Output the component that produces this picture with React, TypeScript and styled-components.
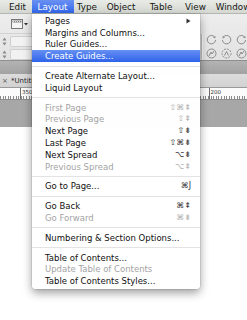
import React from "react";
import styled, { createGlobalStyle, css } from "styled-components";

const GlobalStyle = createGlobalStyle`
  html, body { margin: 0; padding: 0; }
  body { background: #fff; font-family: "DejaVu Sans", "Noto Sans", sans-serif; }
  #root { width: 247px; height: 320px; }
`;

const Screen = styled.div`
  position: relative;
  width: 247px;
  height: 320px;
  overflow: hidden;
  display: flex;
  flex-direction: column;
  background: #fff;
`;

const MenuBar = styled.div`
  height: 14px;
  flex: none;
  display: flex;
  align-items: stretch;
  box-sizing: border-box;
  background: linear-gradient(#e9ece6, #d4d8d1);
  border-bottom: 1px solid #b4b7b1;
  font-size: 8.8px;
  color: #161616;
  white-space: nowrap;
  overflow: hidden;
`;

const Title = styled.div<{ $w?: number; $pl: number; $active?: boolean }>`
  display: flex;
  align-items: center;
  flex: ${(p) => (p.$w ? "none" : "1")};
  width: ${(p) => (p.$w ? `${p.$w}px` : "auto")};
  padding-left: ${(p) => p.$pl}px;
  box-sizing: border-box;
  ${(p) =>
    p.$active &&
    css`
      background: linear-gradient(#6a91f3, #2f64ea);
      color: #fff;
      margin-bottom: -1px;
    `}
`;

const ControlPanel = styled.div`
  height: 46px;
  flex: none;
  display: flex;
  background: linear-gradient(#ededed, #e2e2e2);
`;

const LeftTools = styled.div`
  width: 32px;
  display: flex;
  flex-direction: column;
`;

const IconRow = styled.div`
  height: 19px;
  display: flex;
  align-items: center;
  padding-left: 11px;
  border-bottom: 1px solid #d3d3d3;
`;

const SpinRow = styled.div`
  height: 11px;
  margin-top: 2px;
  display: flex;
  align-items: center;
  gap: 3px;
  padding-left: 2px;
`;

const Field = styled.div`
  flex: 1;
  height: 11px;
  box-sizing: border-box;
  background: #f2f2f2;
  border: 1px solid #d0d0d0;
  border-right: none;
  border-radius: 2px 0 0 2px;
`;

const RightTools = styled.div`
  margin-left: auto;
  width: 52px;
  display: flex;
  align-items: center;
  padding-top: 19px;
  box-sizing: border-box;
`;

const FieldEdge = styled.div`
  width: 11px;
  height: 25px;
  box-sizing: border-box;
  border: 1px solid #cfcfcf;
  border-left: none;
  border-radius: 0 3px 3px 0;
  background: #ececec;
`;

const Divider = styled.div`
  width: 1px;
  height: 25px;
  margin: 0 4px 0 4px;
  background: #bdbdbd;
  box-shadow: 1px 0 0 #f8f8f8;
`;

const IconGrid = styled.div`
  display: grid;
  grid-template-columns: 11px 11px 11px;
  column-gap: 4px;
  row-gap: 3px;
  margin-left: 1px;
`;

const DarkBand = styled.div`
  height: 14px;
  flex: none;
  background: linear-gradient(#b3b3b3, #a2a2a2);
  border-top: 1px solid #8f8f8f;
  box-sizing: border-box;
`;

const TabBar = styled.div`
  height: 14px;
  flex: none;
  display: flex;
  align-items: center;
  background: linear-gradient(#dcdcdc, #d2d2d2);
  border-bottom: 1px solid #9a9a9a;
  box-sizing: border-box;
`;

const Tab = styled.div`
  width: 32px;
  display: flex;
  align-items: center;
  gap: 3px;
  padding-left: 2px;
  box-sizing: border-box;
  font-size: 7px;
  color: #2a2a2a;
  white-space: nowrap;
  overflow: hidden;
`;

const Close = styled.span`
  color: #555;
  font-size: 7px;
`;

const Ruler = styled.div`
  height: 12px;
  flex: none;
  display: flex;
  box-sizing: border-box;
  background:
    repeating-linear-gradient(90deg, #8a8a8a 0 1px, transparent 1px 2.6px) bottom left / 100% 3px no-repeat,
    #fbfbfb;
  border-bottom: 1px solid #8c8c8c;
`;

const RulerMark = styled.div<{ $ml: string; $mr?: string }>`
  margin-left: ${(p) => p.$ml};
  margin-right: ${(p) => p.$mr ?? "0"};
  height: 100%;
  display: flex;
  border-left: 1px solid #6d6d6d;
  padding-left: 1px;
  font-size: 5.5px;
  color: #333;
  line-height: 8px;
`;

const Pasteboard = styled.div`
  height: 27px;
  flex: none;
  background: #a7a7a7;
`;

const Page = styled.div`
  flex: 1;
  background: #fff;
`;

const Menu = styled.div`
  position: absolute;
  top: 14px;
  left: 32px;
  width: 168px;
  box-sizing: border-box;
  padding: 1px 0 2px;
  background: rgba(255, 255, 255, 0.985);
  border-radius: 0 0 4px 4px;
  box-shadow: 0 4px 10px rgba(0, 0, 0, 0.38), 0 0 0 1px rgba(0, 0, 0, 0.08);
  font-size: 8.5px;
`;

const Item = styled.div<{ $disabled?: boolean; $active?: boolean }>`
  height: 11.8px;
  display: flex;
  align-items: center;
  justify-content: space-between;
  padding: 0 9px 0 13px;
  white-space: nowrap;
  color: ${(p) => (p.$disabled ? "#a3a3a3" : "#101010")};
  ${(p) =>
    p.$active &&
    css`
      background: linear-gradient(#6690f3, #2e63ea);
      color: #fff;
    `}
`;

const Shortcut = styled.span<{ $disabled?: boolean }>`
  font-size: 8px;
  line-height: 1;
  color: ${(p) => (p.$disabled ? "#b0b0b0" : "#333")};
`;

const Separator = styled.div`
  height: 8px;
  display: flex;
  align-items: center;
  &::after {
    content: "";
    flex: 1;
    height: 1px;
    background: #e3e3e3;
  }
`;

const FrameIcon = () => (
  <svg width="17" height="10" viewBox="0 0 17 10">
    <rect x="0.5" y="0.5" width="11" height="9" fill="#f4f4f4" stroke="#777" />
    <rect x="1.5" y="1.5" width="9" height="2" fill="#888" />
    <path d="M2 2.5h1M4 2.5h1M6 2.5h1M8 2.5h1" stroke="#ddd" />
    <path d="M13 4h4l-2 2.5z" fill="#333" />
  </svg>
);

const Spinner = () => (
  <svg width="5" height="9" viewBox="0 0 5 9">
    <path d="M2.5 0.5L4.5 3.5H0.5z M2.5 8.5L4.5 5.5H0.5z" fill="#8a8a8a" />
  </svg>
);

const RotateIcon = ({ flip }: { flip?: boolean }) => (
  <svg width="11" height="11" viewBox="0 0 11 11" style={flip ? { transform: "scaleX(-1)" } : undefined}>
    <path d="M8.8 3.2A4.2 4.2 0 1 0 9.6 6" fill="none" stroke="#8c8c8c" strokeWidth="1" />
    <path d="M7 3.4L9.4 1.8 9.3 4.4z" fill="#8c8c8c" />
  </svg>
);

const FigureIcon = ({ variant }: { variant: number }) => (
  <svg width="11" height="11" viewBox="0 0 11 11">
    <circle cx="5.5" cy="5.5" r="4.5" fill="none" stroke="#8c8c8c" strokeDasharray={variant ? "2 1" : undefined} />
    <path d={variant ? "M3.5 7.5L5.5 3.5 7.5 7.5" : "M3 8L5 4 6 6 8 3"} fill="none" stroke="#8c8c8c" />
  </svg>
);

const SubArrow = () => (
  <svg width="5" height="6" viewBox="0 0 5 6">
    <path d="M0.5 0.5L4.5 3 0.5 5.5z" fill="#333" />
  </svg>
);

type Entry =
  | { kind: "sep" }
  | { kind: "item"; label: string; sc?: string; disabled?: boolean; active?: boolean; sub?: boolean };

const entries: Entry[] = [
  { kind: "item", label: "Pages", sub: true },
  { kind: "item", label: "Margins and Columns..." },
  { kind: "item", label: "Ruler Guides..." },
  { kind: "item", label: "Create Guides...", active: true },
  { kind: "sep" },
  { kind: "item", label: "Create Alternate Layout..." },
  { kind: "item", label: "Liquid Layout" },
  { kind: "sep" },
  { kind: "item", label: "First Page", sc: "⇧⌘⇞", disabled: true },
  { kind: "item", label: "Previous Page", sc: "⇧⇞", disabled: true },
  { kind: "item", label: "Next Page", sc: "⇧⇟" },
  { kind: "item", label: "Last Page", sc: "⇧⌘⇟" },
  { kind: "item", label: "Next Spread", sc: "⌥⇟" },
  { kind: "item", label: "Previous Spread", sc: "⌥⇞", disabled: true },
  { kind: "sep" },
  { kind: "item", label: "Go to Page...", sc: "⌘J" },
  { kind: "sep" },
  { kind: "item", label: "Go Back", sc: "⌘⇞" },
  { kind: "item", label: "Go Forward", sc: "⌘⇟", disabled: true },
  { kind: "sep" },
  { kind: "item", label: "Numbering & Section Options..." },
  { kind: "sep" },
  { kind: "item", label: "Table of Contents..." },
  { kind: "item", label: "Update Table of Contents", disabled: true },
  { kind: "item", label: "Table of Contents Styles..." },
];

export default function App() {
  return (
    <>
      <GlobalStyle />
      <Screen>
        <MenuBar>
          <Title $w={32} $pl={9}>Edit</Title>
          <Title $w={42} $pl={5.5} $active>Layout</Title>
          <Title $w={32.7} $pl={2.7}>Type</Title>
          <Title $w={43} $pl={0}>Object</Title>
          <Title $w={35.3} $pl={0}>Table</Title>
          <Title $w={30.7} $pl={0}>View</Title>
          <Title $pl={0}>Window</Title>
        </MenuBar>
        <ControlPanel>
          <LeftTools>
            <IconRow>
              <FrameIcon />
            </IconRow>
            <SpinRow>
              <Spinner />
              <Field />
            </SpinRow>
            <SpinRow>
              <Spinner />
              <Field />
            </SpinRow>
          </LeftTools>
          <RightTools>
            <FieldEdge />
            <Divider />
            <IconGrid>
              <RotateIcon />
              <RotateIcon flip />
              <RotateIcon />
              <FigureIcon variant={0} />
              <FigureIcon variant={1} />
              <FigureIcon variant={0} />
            </IconGrid>
          </RightTools>
        </ControlPanel>
        <DarkBand />
        <TabBar>
          <Tab>
            <Close>×</Close>
            <span>*Untitled-1</span>
          </Tab>
        </TabBar>
        <Ruler>
          <RulerMark $ml="20px">350</RulerMark>
          <RulerMark $ml="auto" $mr="26px">200</RulerMark>
        </Ruler>
        <Pasteboard />
        <Page />
        <Menu>
          {entries.map((e, i) =>
            e.kind === "sep" ? (
              <Separator key={i} />
            ) : (
              <Item key={i} $disabled={e.disabled} $active={e.active}>
                <span>{e.label}</span>
                {e.sub && <SubArrow />}
                {e.sc && <Shortcut $disabled={e.disabled}>{e.sc}</Shortcut>}
              </Item>
            )
          )}
        </Menu>
      </Screen>
    </>
  );
}
